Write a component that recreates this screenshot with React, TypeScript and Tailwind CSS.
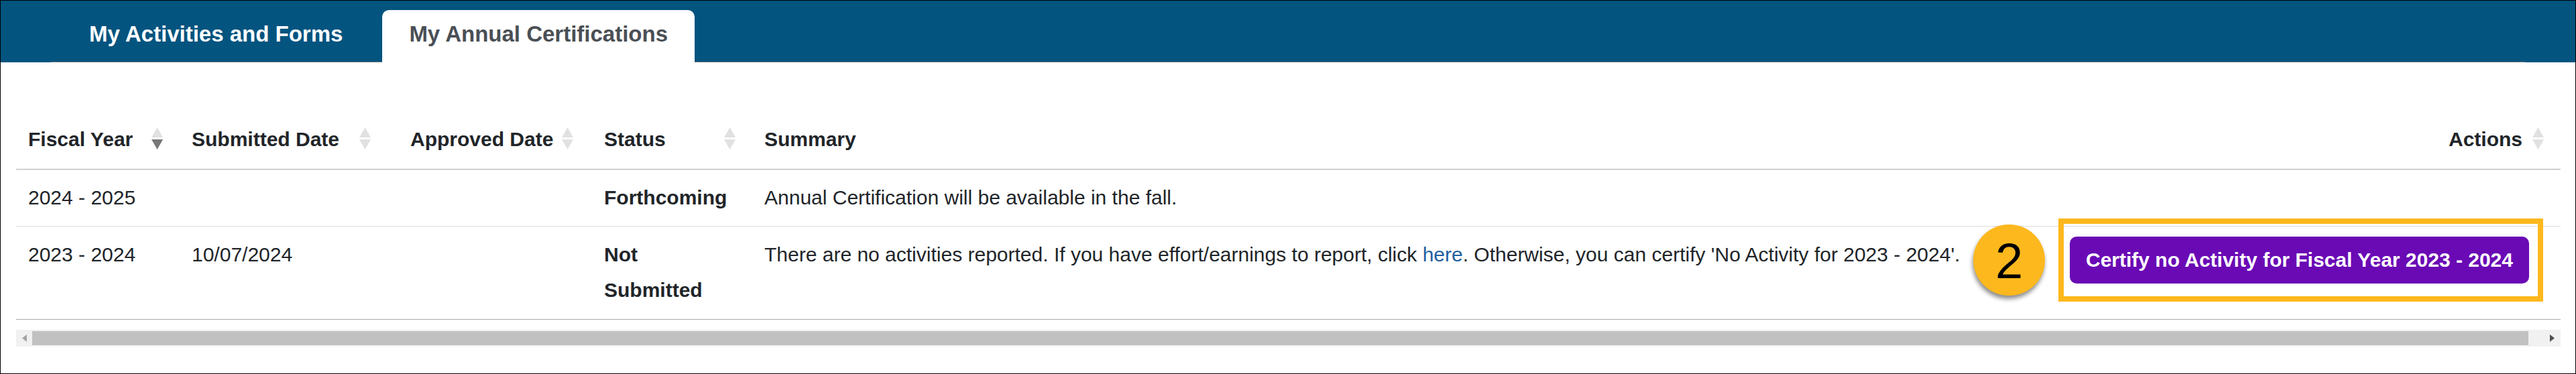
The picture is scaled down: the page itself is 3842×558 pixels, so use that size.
import React from "react";

const gridCols = "grid grid-cols-[244px_326px_289px_239px_1947px_750px]";

function SortIcon({ active }: { active?: boolean }) {
  return (
    <svg width="17" height="33" viewBox="0 0 17 33">
      <path d="M8.5 0 L17 15 L0 15 Z" fill="#e1e1e1" />
      <path d="M0 18 L17 18 L8.5 33 Z" fill={active ? "#777777" : "#e1e1e1"} />
    </svg>
  );
}

export default function App() {
  return (
    <div
      className="w-[3842px] h-[558px] border border-black bg-white overflow-hidden relative text-[#212529]"
      style={{ fontFamily: '"Liberation Sans", Arial, sans-serif' }}
    >
      {/* Tab band */}
      <div className="h-[92px] bg-[#03547f] flex items-end">
        <div className="ml-[75px] mr-[75px] flex-1 h-[78px] border-b border-[#777777] flex items-start gap-[19px] pl-[17px]">
          <div className="h-[77px] mt-[1px] px-[40px] pt-[18px] text-[33px] leading-[33px] font-bold text-white">
            My Activities and Forms
          </div>
          <div className="h-[78px] mt-[0px] px-[40px] pt-[19px] text-[33px] leading-[33px] font-bold text-[#4a4f55] bg-white rounded-t-[10px]">
            My Annual Certifications
          </div>
        </div>
      </div>

      {/* Content */}
      <div className="pt-[72px] pl-[23px]">
        <div className="w-[3795px]">
          {/* Header */}
          <div className={`${gridCols} border-b border-[#aaaaaa] text-[30px] font-bold leading-[53px]`}>
            <div className="relative pl-[18px] pr-[30px] pt-[16px] pb-[18px]">
              Fiscal Year
              <span className="absolute top-[25px] right-[25px]"><SortIcon active /></span>
            </div>
            <div className="relative pl-[18px] pr-[30px] pt-[16px] pb-[18px]">
              Submitted Date
              <span className="absolute top-[25px] right-[41px]"><SortIcon /></span>
            </div>
            <div className="relative pl-[18px] pr-[30px] pt-[16px] pb-[18px]">
              Approved Date
              <span className="absolute top-[25px] right-[28px]"><SortIcon /></span>
            </div>
            <div className="relative pl-[18px] pr-[30px] pt-[16px] pb-[18px]">
              Status
              <span className="absolute top-[25px] right-[25px]"><SortIcon /></span>
            </div>
            <div className="relative pl-[18px] pr-[30px] pt-[16px] pb-[18px]">Summary</div>
            <div className="relative pl-[18px] pr-[57px] pt-[16px] pb-[18px] text-right">
              Actions
              <span className="absolute top-[25px] right-[25px]"><SortIcon /></span>
            </div>
          </div>

          {/* Row 1 */}
          <div className={`${gridCols} border-b border-[#dddddd] text-[30px] leading-[53px]`}>
            <div className="pl-[18px] pr-[30px] pt-[15px] pb-[16px]">2024 - 2025</div>
            <div className="pl-[18px] pr-[30px] pt-[15px] pb-[16px]"></div>
            <div className="pl-[18px] pr-[30px] pt-[15px] pb-[16px]"></div>
            <div className="pl-[18px] pr-[30px] pt-[15px] pb-[16px] font-bold">Forthcoming</div>
            <div className="pl-[18px] pr-[30px] pt-[15px] pb-[16px]">
              Annual Certification will be available in the fall.
            </div>
            <div className="pl-[18px] pr-[30px] pt-[15px] pb-[16px]"></div>
          </div>

          {/* Row 2 */}
          <div className={`${gridCols} border-b border-[#aaaaaa] text-[30px] leading-[53px]`}>
            <div className="pl-[18px] pr-[30px] pt-[15px] pb-[17px]">2023 - 2024</div>
            <div className="pl-[18px] pr-[30px] pt-[15px] pb-[17px]">10/07/2024</div>
            <div className="pl-[18px] pr-[30px] pt-[15px] pb-[17px]"></div>
            <div className="pl-[18px] pr-[30px] pt-[15px] pb-[17px] font-bold">Not Submitted</div>
            <div className="pl-[18px] pr-[30px] pt-[15px] pb-[17px] whitespace-nowrap">
              There are no activities reported. If you have effort/earnings to report, click{" "}
              <a className="text-[#1f5f9f]">here</a>. Otherwise, you can certify 'No Activity for 2023 - 2024'.
            </div>
            <div className="pl-[18px] pr-[30px] pt-[15px] pb-[17px] flex items-start">
              <button className="h-[70px] px-[24px] rounded-[10px] bg-[#6a0ab5] text-white font-bold text-[30px] leading-[30px] whitespace-nowrap flex items-center">
                Certify no Activity for Fiscal Year 2023 - 2024
              </button>
            </div>
          </div>

          {/* Scrollbar */}
          <div className="mt-[15px] h-[25px] bg-[#f1f1f1] flex items-center relative">
            <svg className="absolute left-[9px] top-[7px]" width="7" height="11" viewBox="0 0 7 11">
              <path d="M7 0 L0 5.5 L7 11 Z" fill="#a3a3a3" />
            </svg>
            <div className="ml-[24px] w-[3723px] h-[21px] bg-[#c1c1c1]" />
            <svg className="absolute right-[9px] top-[7px]" width="7" height="11" viewBox="0 0 7 11">
              <path d="M0 0 L7 5.5 L0 11 Z" fill="#505050" />
            </svg>
          </div>
        </div>
      </div>

      {/* Annotation: number badge */}
      <div className="absolute left-[2942px] top-[334px] w-[107px] h-[106px] rounded-full bg-[#fdb81e] shadow-[-1px_5px_6px_rgba(0,0,0,0.45)] flex items-center justify-center">
        <span className="text-[74px] leading-[74px] text-black mt-[4px]">2</span>
      </div>

      {/* Annotation: highlight box */}
      <div className="absolute left-[3069px] top-[325px] w-[723px] h-[124px] border-[8px] border-[#fdb81e]" />
    </div>
  );
}
